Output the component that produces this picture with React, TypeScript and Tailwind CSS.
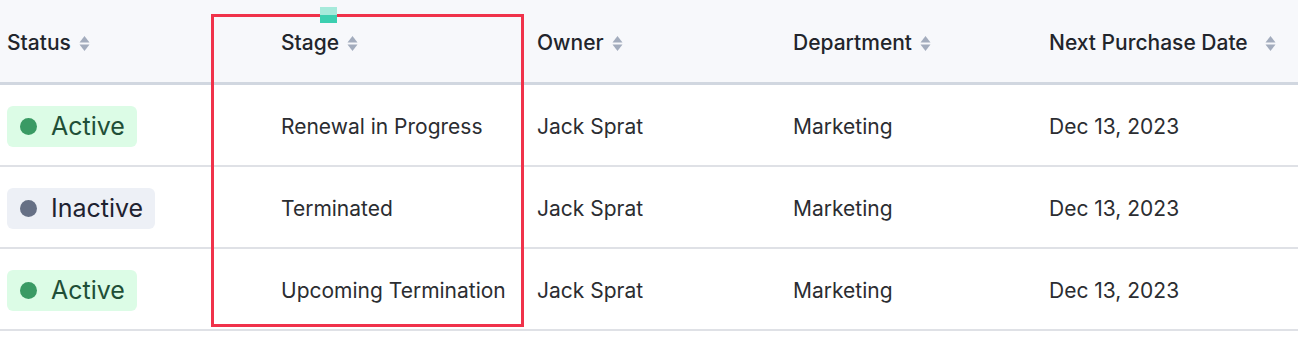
import type { ReactNode } from "react";

type Row = {
  status: "Active" | "Inactive";
  stage: string;
  owner: string;
  department: string;
  nextPurchase: string;
};

const rows: Row[] = [
  {
    status: "Active",
    stage: "Renewal in Progress",
    owner: "Jack Sprat",
    department: "Marketing",
    nextPurchase: "Dec 13, 2023",
  },
  {
    status: "Inactive",
    stage: "Terminated",
    owner: "Jack Sprat",
    department: "Marketing",
    nextPurchase: "Dec 13, 2023",
  },
  {
    status: "Active",
    stage: "Upcoming Termination",
    owner: "Jack Sprat",
    department: "Marketing",
    nextPurchase: "Dec 13, 2023",
  },
];

const cols = "grid grid-cols-[274px_256px_256px_256px_256px]";

function SortIcon() {
  return (
    <svg
      aria-hidden="true"
      className="h-[17px] w-[11px] shrink-0"
      viewBox="0 0 11 17"
    >
      <path d="M5.5 1 L10.5 7.5 H0.5 Z" fill="#a3acbd" />
      <path d="M5.5 16 L10.5 9.5 H0.5 Z" fill="#a3acbd" />
    </svg>
  );
}

function HeaderCell({
  children,
  wide = false,
}: {
  children: ReactNode;
  wide?: boolean;
}) {
  return (
    <div className="flex items-center pt-[4px] pl-[7px]">
      <span className="text-[21px] font-medium text-[#22252b]">{children}</span>
      <span className={wide ? "ml-[17px]" : "ml-[8px]"}>
        <SortIcon />
      </span>
    </div>
  );
}

function StatusBadge({ status }: { status: Row["status"] }) {
  const active = status === "Active";
  return (
    <span
      className={
        active
          ? "inline-flex h-[41px] items-center gap-[14px] rounded-[6px] bg-[#dcfce6] pr-[12px] pl-[13px] text-[25px] text-[#1f4f37]"
          : "inline-flex h-[41px] items-center gap-[14px] rounded-[6px] bg-[#edf0f6] pr-[12px] pl-[13px] text-[25px] text-[#1e2230]"
      }
    >
      <span
        className={
          active
            ? "size-[17px] rounded-full bg-[#3a9a64]"
            : "size-[17px] rounded-full bg-[#667085]"
        }
      />
      {status}
    </span>
  );
}

export default function App() {
  return (
    <div className="relative h-[342px] w-[1298px] overflow-hidden bg-white font-['Inter',sans-serif]">
      <div
        className={`${cols} h-[85px] border-b-[3px] border-[#d1d7e0] bg-[#f7f8fb]`}
      >
        <HeaderCell>Status</HeaderCell>
        <HeaderCell>Stage</HeaderCell>
        <HeaderCell>Owner</HeaderCell>
        <HeaderCell>Department</HeaderCell>
        <HeaderCell wide>Next Purchase Date</HeaderCell>
      </div>

      {rows.map((row, i) => (
        <div
          key={i}
          className={`${cols} h-[82px] border-b-2 border-[#dfe1e6] pt-[3px] text-[21px] text-[#2b2d31]`}
        >
          <div className="flex items-center pl-[7px]">
            <StatusBadge status={row.status} />
          </div>
          <div className="flex items-center pl-[7px]">{row.stage}</div>
          <div className="flex items-center pl-[7px]">{row.owner}</div>
          <div className="flex items-center pl-[7px]">{row.department}</div>
          <div className="flex items-center pl-[7px]">{row.nextPurchase}</div>
        </div>
      ))}

      {/* highlight box over the Stage column */}
      <div className="pointer-events-none absolute top-[14px] left-[211px] h-[313px] w-[313px] border-[3px] border-[#f0324a]" />
      {/* drag handle marker */}
      <div className="pointer-events-none absolute top-[7px] left-[320px] flex h-[16px] w-[17px] flex-col">
        <span className="h-[8px] bg-[#a6eadb]" />
        <span className="h-[8px] bg-[#3ccfb0]" />
      </div>
    </div>
  );
}
